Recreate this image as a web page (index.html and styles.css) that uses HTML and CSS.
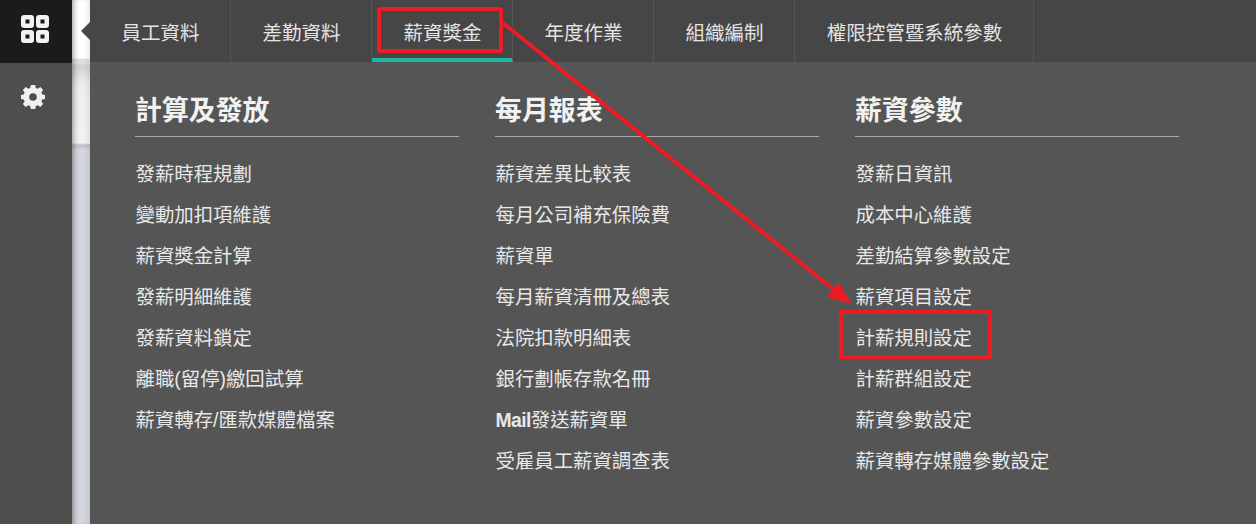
FILE: index.html
```html
<!DOCTYPE html>
<html lang="zh-Hant">
<head>
<meta charset="utf-8">
<title>薪資獎金</title>
<link rel="stylesheet" href="styles.css">
</head>
<body>
<div class="app">
  <aside class="rail">
    <div class="rail-top">
      <svg width="28" height="28" viewBox="0 0 28 28"><g fill="none" stroke="#f2f2f2" stroke-width="4.500"><rect x="2.250" y="2.250" width="8.500" height="8.500" rx="1"/><rect x="17.250" y="2.250" width="8.500" height="8.500" rx="1"/><rect x="2.250" y="17.250" width="8.500" height="8.500" rx="1"/><rect x="17.250" y="17.250" width="8.500" height="8.500" rx="1"/></g></svg>
    </div>
    <div class="rail-gear">
      <svg width="24" height="24" viewBox="0 0 24 24"><path fill="#f0f0f0" fill-rule="evenodd" d="M9.800 0h4.400l.6 3 1.900.8 2.600-1.700 2.800 2.800-1.700 2.600.8 1.900 3 .6v4l-3 .6-.8 1.900 1.700 2.600-2.800 2.800-2.600-1.700-1.900.8-.6 3H9.800l-.6-3-1.900-.8-2.600 1.700-2.800-2.800 1.700-2.600-.8-1.900-3-.6v-4l3-.6.8-1.900-1.700-2.600 2.800-2.800 2.600 1.700 1.900-.8zM12 8.200a3.800 3.800 0 1 0 0 7.600 3.800 3.800 0 0 0 0-7.600z"/></svg>
    </div>
  </aside>
  <div class="strip"><span class="notch"></span></div>
  <main class="panel">
    <nav class="tabs">
      <a class="tab">員工資料</a>
      <a class="tab">差勤資料</a>
      <a class="tab active">薪資獎金</a>
      <a class="tab">年度作業</a>
      <a class="tab">組織編制</a>
      <a class="tab">權限控管暨系統參數</a>
    </nav>
    <div class="cols">
      <section class="col">
        <h2>計算及發放</h2>
        <ul>
          <li>發薪時程規劃</li>
          <li>變動加扣項維護</li>
          <li>薪資獎金計算</li>
          <li>發薪明細維護</li>
          <li>發薪資料鎖定</li>
          <li>離職(留停)繳回試算</li>
          <li>薪資轉存/匯款媒體檔案</li>
        </ul>
      </section>
      <section class="col">
        <h2>每月報表</h2>
        <ul>
          <li>薪資差異比較表</li>
          <li>每月公司補充保險費</li>
          <li>薪資單</li>
          <li>每月薪資清冊及總表</li>
          <li>法院扣款明細表</li>
          <li>銀行劃帳存款名冊</li>
          <li><span class="latin">Mail</span>發送薪資單</li>
          <li>受雇員工薪資調查表</li>
        </ul>
      </section>
      <section class="col">
        <h2>薪資參數</h2>
        <ul>
          <li>發薪日資訊</li>
          <li>成本中心維護</li>
          <li>差勤結算參數設定</li>
          <li>薪資項目設定</li>
          <li>計薪規則設定</li>
          <li>計薪群組設定</li>
          <li>薪資參數設定</li>
          <li>薪資轉存媒體參數設定</li>
        </ul>
      </section>
    </div>
  </main>
  <svg class="marks" width="1256" height="524" viewBox="0 0 1256 524">
    <rect x="379" y="9" width="122" height="42" fill="none" stroke="#ed1c24" stroke-width="4" rx="1"/>
    <rect x="841" y="312" width="149" height="45" fill="none" stroke="#ed1c24" stroke-width="4"/>
    <line x1="503" y1="23" x2="838" y2="293" stroke="#ed1c24" stroke-width="4"/>
    <polygon points="851.500,304 826.500,297 839,282.500" fill="#ed1c24"/>
  </svg>
</div>
</body>
</html>
```
FILE: styles.css
```css
* { box-sizing: border-box; }
html, body { margin: 0; padding: 0; height: 100%; overflow: hidden; }
body { font-family: "Liberation Sans", "Noto Sans CJK TC", sans-serif; }
.app { position: relative; display: flex; width: 1256px; height: 524px; background: #fff; }
.rail { width: 72px; flex: none; background: #4e4e4c; }
.rail-top { height: 63px; background: #1b1b1b; display: flex; align-items: center; justify-content: center; padding-right: 2px; padding-bottom: 5px; }
.rail-gear { display: flex; justify-content: center; padding: 22px 6px 0 0; }
.strip { position: relative; width: 18px; flex: none; background: linear-gradient(#fff 0, #fff 58px, #e0e0e0 59px, #e0e0e0 64px, #d0d0d0 65px, #eeeeee 85px, #f2f2f2 143px, #bdbfc4 145px, #d3d6dd 150px, #d3d6dd 524px); box-shadow: inset 5px 0 5px -3px rgba(0,0,0,.35), inset -6px 0 6px -5px rgba(0,0,0,.12); }
.notch { position: absolute; right: 0; top: 22px; border: 9px solid transparent; border-left-width: 0; border-right-color: #464646; }
.panel { flex: 1; background: #555; min-width: 0; }
.tabs { display: flex; height: 62px; background: #464646; }
.tab { width: 141px; height: 62px; padding: 18.500px 0 0 1px; text-align: center; color: #e4e4e4; font-size: 19.500px; line-height: 28px; border-right: 1px solid #555; }
.tab:last-child { width: 239px; }
.tab.active { border-bottom: 4px solid #1fb5a0; }
.cols { display: grid; grid-template-columns: repeat(3, 324px); column-gap: 36px; padding: 27px 0 0 45px; }
.col h2 { margin: 0; height: 47.500px; padding: 1px 0 0 0; border-bottom: 1px solid #aaa; color: #f2f2f2; font-size: 26.900px; line-height: 42px; font-weight: 700; }
.col ul { list-style: none; margin: 0; padding: 17px 0 0 .5px; }
.col li { height: 41.100px; line-height: 41px; font-size: 19.400px; color: #e8e8e8; white-space: nowrap; }
.latin { font-weight: 700; letter-spacing: -0.6px; }
.marks { position: absolute; left: 0; top: 0; pointer-events: none; }
```
